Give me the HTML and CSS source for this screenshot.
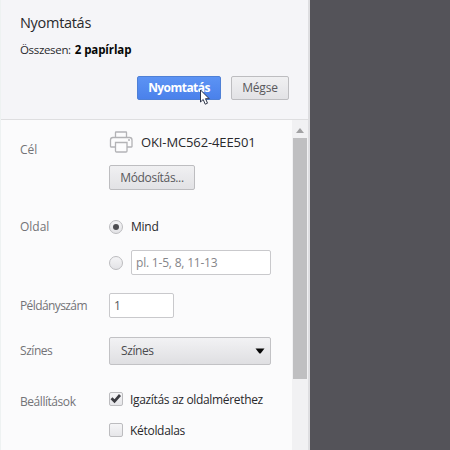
FILE: index.html
```html
<!DOCTYPE html>
<html lang="hu">
<head>
<meta charset="utf-8">
<title>Nyomtatás</title>
<link rel="stylesheet" href="styles.css">
</head>
<body>
<div class="dialog">
  <aside class="sidebar">
    <header class="header">
      <h1 class="title"><span>Nyomtatás</span></h1>
      <p class="summary"><span class="total">Összesen:</span> <b class="count">2 papírlap</b></p>
      <div class="actions">
        <button class="button primary"><span>Nyomtatás</span></button>
        <button class="button cancel"><span>Mégse</span></button>
      </div>
    </header>
    <div class="body">
      <main class="settings">
        <section class="row destination">
          <h2 class="label l-cel">Cél</h2>
          <div class="controls">
            <div class="printer">
              <svg class="printer-icon" width="24" height="22" viewBox="0 0 24 22" fill="#fcfcfd" stroke="#b3b3b6" stroke-width="1.3">
                <path d="M6.500 7V1.500Q6.500 1 7 1H17Q17.500 1 17.500 1.500V7"/>
                <path d="M4 6.500H20.500Q23 6.500 23 9V15.500Q23 16 22.500 16H2Q1.500 16 1.500 15.500V9Q1.500 6.500 4 6.500Z"/>
                <path d="M6.500 11.500H18V20Q18 21 17 21H7.500Q6.500 21 6.500 20Z"/>
                <path d="M19 9H21"/>
              </svg>
              <span class="printer-name">OKI-MC562-4EE501</span>
            </div>
            <button class="button change"><span>Módosítás...</span></button>
          </div>
        </section>
        <section class="row pages">
          <h2 class="label l-oldal">Oldal</h2>
          <div class="controls">
            <label class="option"><i class="radio checked"></i><span class="t-mind">Mind</span></label>
            <label class="option"><i class="radio"></i><span class="field range"><span>pl. 1-5, 8, 11-13</span></span></label>
          </div>
        </section>
        <section class="row copies">
          <h2 class="label l-peldany">Példányszám</h2>
          <div class="controls"><div class="field amount">1</div></div>
        </section>
        <section class="row color">
          <h2 class="label l-szines">Színes</h2>
          <div class="controls">
            <div class="select"><span>Színes</span>
              <svg width="10" height="6" viewBox="0 0 10 6"><path d="M.5.5h9L6 5Q5 6 4 5Z" fill="#080808"/></svg>
            </div>
          </div>
        </section>
        <section class="row options">
          <h2 class="label l-beall">Beállítások</h2>
          <div class="controls">
            <label class="option"><i class="checkbox"><svg width="13" height="13" viewBox="0 0 13 13"><path d="M2.500 6.300L5.500 9.300L11 3" fill="none" stroke="#3c3c42" stroke-width="2.700"/></svg></i><span class="t-fit">Igazítás az oldalmérethez</span></label>
            <label class="option"><i class="checkbox"></i><span class="t-duplex">Kétoldalas</span></label>
          </div>
        </section>
      </main>
      <div class="scrollbar">
        <svg class="up" width="8" height="5" viewBox="0 0 8 5"><path d="M0 5L4 0L8 5Z" fill="#a1a1a3"/></svg>
        <div class="thumb"></div>
      </div>
    </div>
  </aside>
</div>
<svg class="cursor" width="11" height="17" viewBox="0 0 11 17"><path d="M1.500 1V13L4.200 10.500L6.200 15.200L8.500 14.200L6.500 9.700H10.200Z" fill="#fff" stroke="#30364a" stroke-width="1"/></svg>
</body>
</html>
```

FILE: styles.css
```css
* { box-sizing: border-box; }
body {
  margin: 0;
  height: 450px;
  overflow: hidden;
  background: #545359;
  font: 12px/18px "Open Sans", "Noto Sans", sans-serif;
  color: #29292c;
}
h1, h2, p { margin: 0; font-weight: 400; }
span, h1, h2, b { white-space: nowrap; }
.dialog { height: 450px; display: flex; }
.sidebar {
  width: 310px;
  display: flex;
  flex-direction: column;
  background: #fbfbfc;
  border-left: 1px solid #eef2f2;
  border-right: 2px solid #dedee1;
}
.header {
  height: 120px;
  padding: 12px 19px 0;
  background: #f5f5f8;
  border-bottom: 1px solid #dedee0;
}
.title { font-size: 14.5px; line-height: 22px; height: 22px; letter-spacing: -.3px; }
.summary { height: 18px; margin-top: 7px; display: flex; gap: 4px; font-size: 11.5px; }
.total { letter-spacing: -.33px; }
.count { color: #050505; font-weight: 700; letter-spacing: -.1px; }
.actions { display: flex; justify-content: flex-end; gap: 10px; margin-top: 17px; }
.button {
  height: 24px;
  padding: 0;
  display: flex;
  align-items: center;
  justify-content: center;
  font: 12px/18px "Open Sans", "Noto Sans", sans-serif;
  color: #58585c;
  border: 1px solid #bdbdc0;
  border-radius: 2px;
  background: linear-gradient(#f0f0f2, #e2e2e5);
}
.primary {
  width: 84px;
  color: #fff;
  font-weight: 700;
  letter-spacing: -.55px;
  border-color: #4f80d6;
  background: linear-gradient(#5c93f4, #4a81eb);
}
.cancel { width: 58px; letter-spacing: -.2px; }
.change { width: 86px; height: 25px; margin-top: 10px; letter-spacing: -.33px; }
.body { flex: 1; min-height: 0; display: flex; justify-content: space-between; }
.settings { width: 271px; padding-left: 19px; }
.row { display: flex; }
.label { width: 89px; font-size: 12px; line-height: 18px; color: #737377; }
.l-peldany { letter-spacing: -.6px; }
.l-szines { letter-spacing: -.45px; }
.l-beall { letter-spacing: -.45px; }
.destination { height: 97px; padding-top: 10px; }
.destination .label { margin-top: 11px; }
.printer { display: flex; align-items: center; gap: 8px; height: 25px; }
.printer-icon { margin-top: -1px; }
.printer-name { font-size: 13px; letter-spacing: -.12px; margin-top: -1px; }
.pages { height: 76px; }
.pages .label { margin-top: 1px; }
.option { display: flex; align-items: center; height: 20px; gap: 7px; }
.pages .option + .option { margin-top: 13px; height: 25px; }
.radio {
  width: 14px;
  height: 14px;
  flex: none;
  border: 1px solid #bcbcbf;
  border-radius: 50%;
  background: linear-gradient(#f4f4f6, #e3e3e6);
}
.radio + span { margin-left: 1px; }
.t-mind { letter-spacing: -.25px; }
.checked { display: grid; place-items: center; }
.checked::after { content: ""; width: 6px; height: 6px; border-radius: 50%; background: #4d4d51; }
.field {
  height: 25px;
  border: 1px solid #c9c9cc;
  border-radius: 2px;
  background: #fff;
  padding-left: 4px;
  line-height: 24px;
  color: #58585c;
}
.range { width: 140px; color: #858589; letter-spacing: -.2px; }
.copies { height: 44px; }
.copies .label { margin-top: 4px; }
.amount { width: 65px; }
.color { height: 52px; }
.color .label { margin-top: 5px; }
.select {
  width: 162px;
  height: 28px;
  padding: 0 5px 0 11px;
  display: flex;
  align-items: center;
  justify-content: space-between;
  color: #4b4b4f;
  letter-spacing: -.4px;
  border: 1px solid #c2c2c5;
  border-radius: 2px;
  background: linear-gradient(#f2f2f4, #dfdfe2);
}
.options .label { margin-top: 4px; }
.options .option + .option { margin-top: 11px; }
.t-fit { letter-spacing: -.33px; padding-top: 1px; }
.t-duplex { letter-spacing: -.3px; padding-top: 1px; }
.checkbox {
  width: 14px;
  height: 14px;
  flex: none;
  display: flex;
  border: 1px solid #bcbcbf;
  border-radius: 2px;
  background: linear-gradient(#f5f5f7, #e6e6e9);
}
.checkbox svg { overflow: visible; margin: -1px; }
.scrollbar {
  width: 16px;
  background: #f1f1f3;
  display: flex;
  flex-direction: column;
  align-items: center;
}
.up { margin: 8px 0 5px; flex: none; }
.thumb { width: 14px; height: 241px; background: #bfbfc1; }
.cursor { position: absolute; left: 199px; top: 89px; }
```
